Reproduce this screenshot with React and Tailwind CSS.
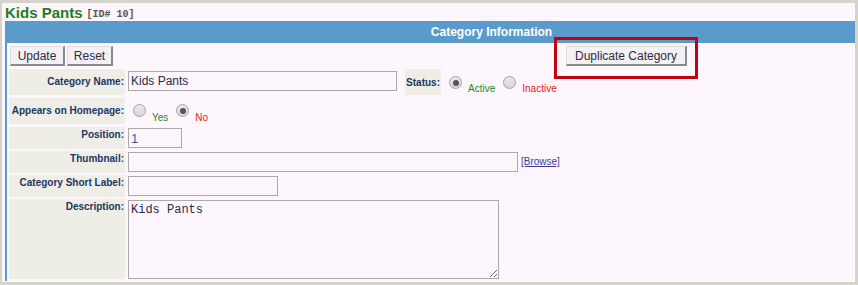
import React from "react";

const Radio = ({ checked }) => (
  <span className="flex items-center justify-center w-[13px] h-[13px] rounded-full border border-[#a3a3a3] bg-[linear-gradient(#e9e9e9,#d6d6d6)] shrink-0">
    {checked && <span className="w-[6px] h-[6px] rounded-full bg-[#555]" />}
  </span>
);

const Label = ({ children, middle, h }) => (
  <div
    className={`w-[116px] ${h} bg-[#efeee6] flex justify-end pr-[1px] whitespace-nowrap text-[10px] leading-[12px] font-bold text-[#1c3664] ${
      middle ? "items-center" : "items-start pt-[2px]"
    }`}
  >
    {children}
  </div>
);

const btn =
  "h-[20px] flex items-center justify-center bg-[#f3f1f3] border-t border-l border-[#dedede] border-r-2 border-b-2 border-r-[#8a8a8a] border-b-[#8a8a8a] text-[12px] text-[#2e2a48]";

const input =
  "h-[20px] border border-[#a9a9a9] bg-[#fdf6fd] px-[2px] text-[12px] text-[#2a2a4a] outline-none";

const App = () => {
  return (
    <div
      className="w-[858px] h-[285px] overflow-hidden bg-[#d5d4cc] pt-[3px] pl-[2px] pr-[3px] pb-[3px]"
      style={{ fontFamily: '"Liberation Sans", Arial, sans-serif' }}
    >
      <div className="relative h-full bg-[#fdf6fd]">
        <div className="h-[18px] pl-[3px] flex items-end gap-[4px]">
          <span className="text-[15px] leading-[16px] font-bold text-[#1e7d1e]">Kids Pants</span>
          <span className="text-[10px] leading-[12px] font-bold text-[#555]" style={{ fontFamily: '"Liberation Mono", monospace' }}>
            [ID# 10]
          </span>
        </div>

        <div className="ml-[3px] w-[850px]">
          <div className="h-[22px] bg-[#5a9bcb] flex items-center justify-center pl-[123px] text-[12px] font-bold text-white">
            Category Information
          </div>

          <div className="border-l-2 border-[#5a9bcb] pl-[2px] pb-[2px]">
            <div className="flex pt-[3px] pl-[1px]">
              <button className={`${btn} w-[55px]`}>Update</button>
              <button className={`${btn} w-[46px] ml-[2px]`}>Reset</button>
              <button className={`${btn} w-[121px] ml-[453px]`}>Duplicate Category</button>
            </div>

            <div className="flex mt-[3px]">
              <Label middle h="h-[26px]">Category Name:</Label>
              <input className={`${input} w-[269px] ml-[3px] mt-[2px]`} defaultValue="Kids Pants" />
              <div className="ml-[8px] w-[36px] h-[26px] bg-[#efeee6] flex items-center justify-end pr-[1px] text-[10px] font-bold text-[#1c3664]">
                Status:
              </div>
              <div className="ml-[8px] mt-[7px]"><Radio checked /></div>
              <span className="ml-[6px] mt-[14px] text-[10px] leading-[12px] text-[#1f8a1f]">Active</span>
              <div className="ml-[8px] mt-[7px]"><Radio /></div>
              <span className="ml-[6px] mt-[14px] text-[10px] leading-[12px] text-[#e82020]">Inactive</span>
            </div>

            <div className="flex mt-[3px]">
              <Label middle h="h-[26px]">Appears on Homepage:</Label>
              <div className="ml-[8px] mt-[6px]"><Radio /></div>
              <span className="ml-[6px] mt-[14px] text-[10px] leading-[12px] text-[#1f8a1f]">Yes</span>
              <div className="ml-[8px] mt-[6px]"><Radio checked /></div>
              <span className="ml-[6px] mt-[14px] text-[10px] leading-[12px] text-[#e82020]">No</span>
            </div>

            <div className="flex mt-[3px]">
              <Label h="h-[22px]">Position:</Label>
              <input className={`${input} w-[54px] ml-[3px] mt-[1px] text-[13px] text-[#3a5a8a]`} defaultValue="1" />
            </div>

            <div className="flex mt-[2px]">
              <Label h="h-[22px]">Thumbnail:</Label>
              <input className={`${input} w-[390px] ml-[3px] mt-[1px]`} />
              <a href="#" className="ml-[3px] mt-[5px] text-[10px] leading-[12px] text-[#3a3a9a] underline">
                [Browse]
              </a>
            </div>

            <div className="flex mt-[2px]">
              <Label h="h-[22px]">Category Short Label:</Label>
              <input className={`${input} w-[150px] ml-[3px] mt-[1px]`} />
            </div>

            <div className="flex mt-[2px]">
              <Label h="h-[80px]">Description:</Label>
              <textarea
                className="w-[371px] h-[79px] ml-[3px] mt-[1px] border border-[#a9a9a9] bg-[#fdf6fd] px-[2px] py-[2px] text-[12px] leading-[15px] text-[#2a2a4a] outline-none"
                style={{ fontFamily: '"Liberation Mono", monospace' }}
                defaultValue="Kids Pants"
              />
            </div>
          </div>
        </div>

        <div className="absolute left-[552px] top-[34px] w-[144px] h-[42px] border-[3px] border-[#c4000c]" />
      </div>
    </div>
  );
};

export default App;
